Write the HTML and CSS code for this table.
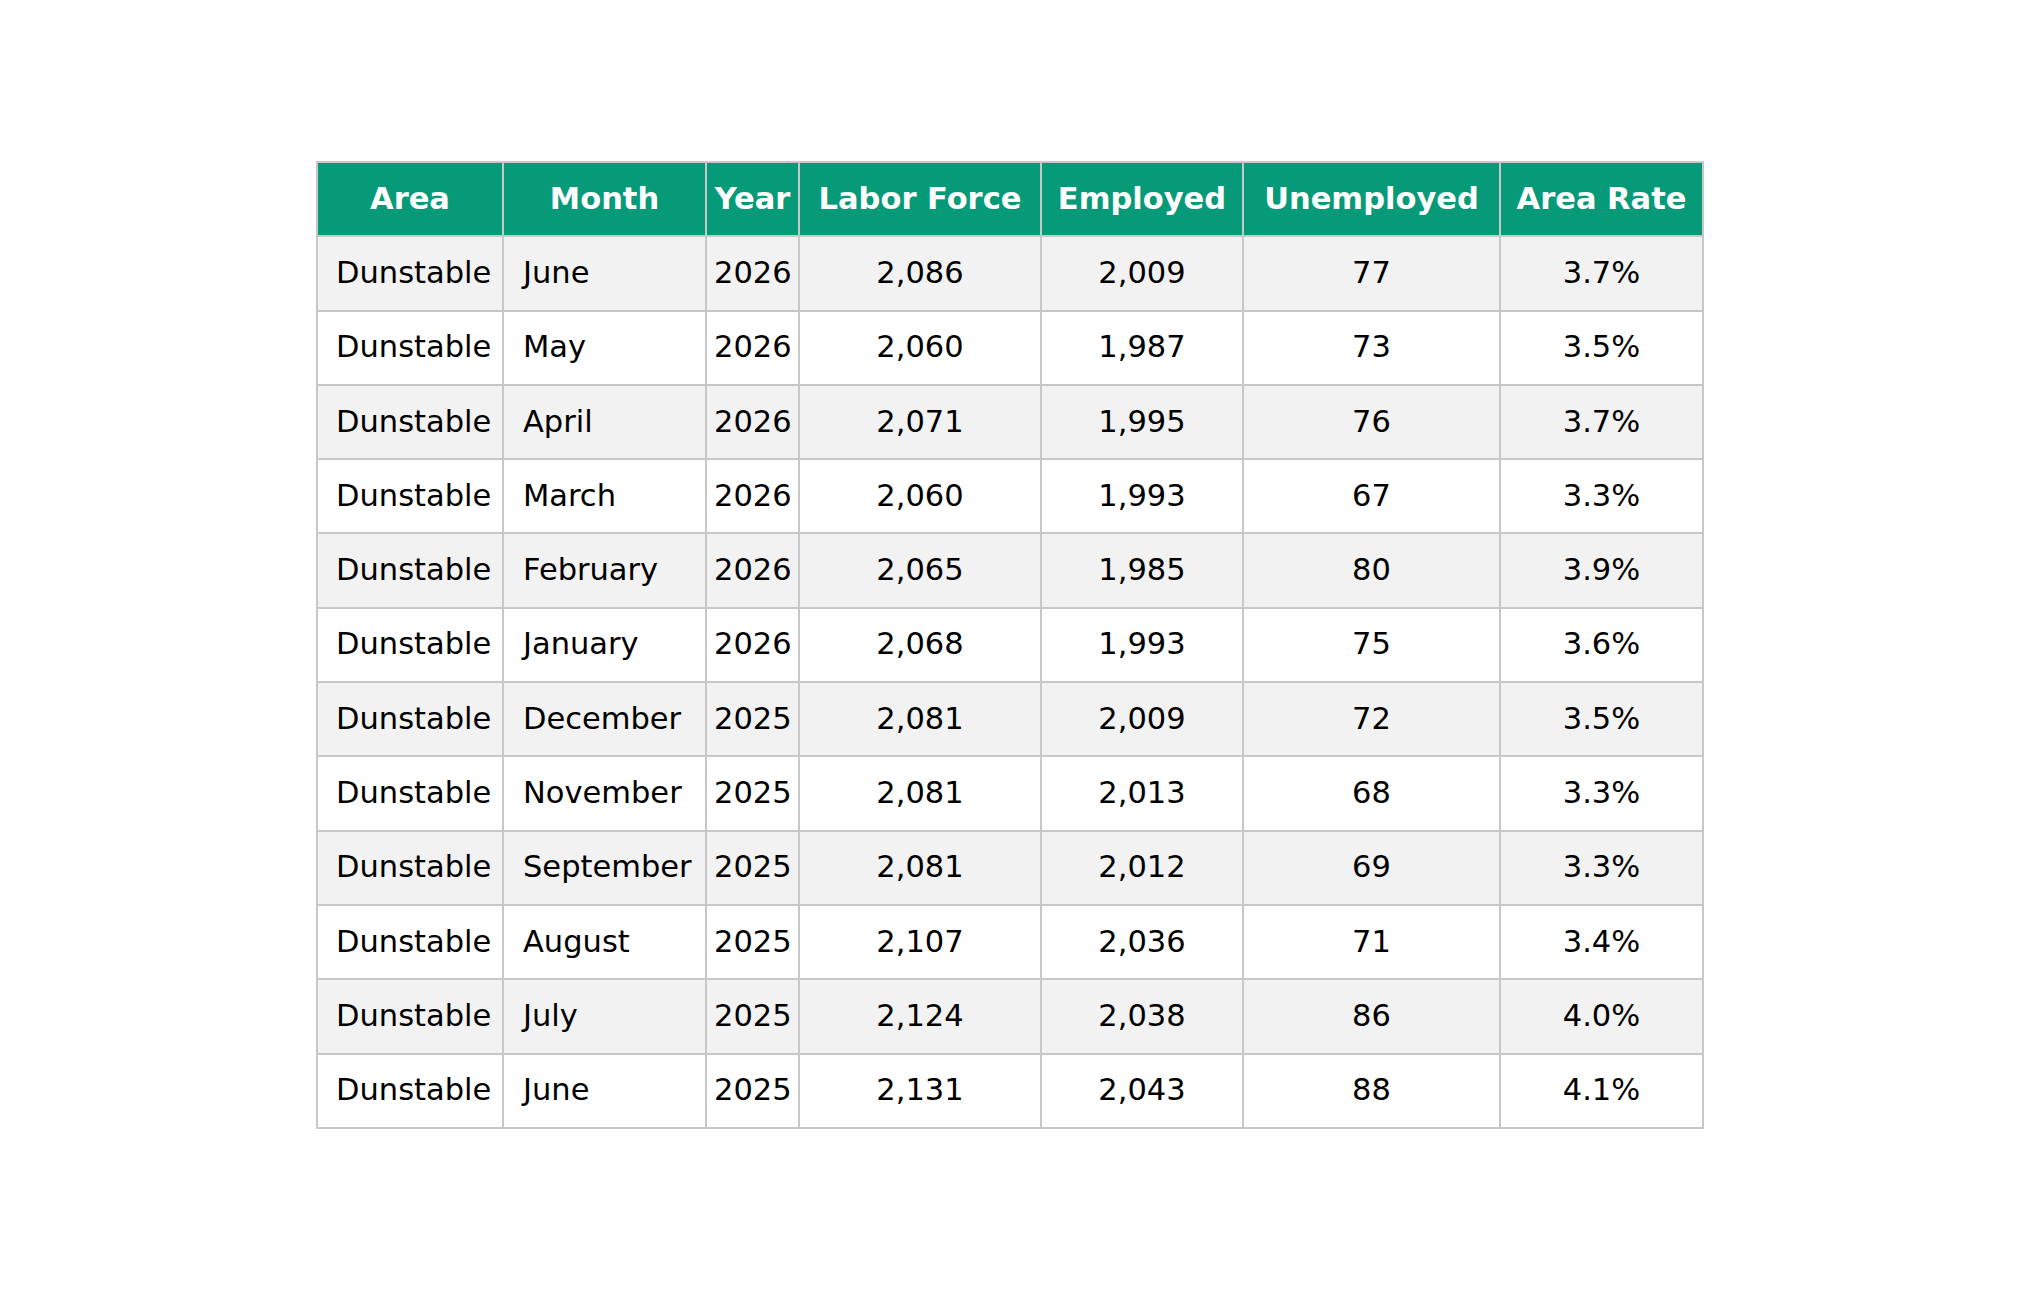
FILE: index.html
```html
<!DOCTYPE html>
<html lang="en">
<head>
<meta charset="utf-8">
<title>Dunstable Labor Force</title>
<link rel="stylesheet" href="styles.css">
</head>
<body>
<main class="page">
<table class="data">
<colgroup>
<col class="c-area"><col class="c-month"><col class="c-year"><col class="c-lf"><col class="c-emp"><col class="c-unemp"><col class="c-rate">
</colgroup>
<thead>
<tr><th>Area</th><th>Month</th><th>Year</th><th>Labor Force</th><th>Employed</th><th>Unemployed</th><th>Area Rate</th></tr>
</thead>
<tbody>
<tr><td class="area">Dunstable</td><td class="month">June</td><td class="year">2026</td><td>2,086</td><td>2,009</td><td>77</td><td>3.7%</td></tr>
<tr><td class="area">Dunstable</td><td class="month">May</td><td class="year">2026</td><td>2,060</td><td>1,987</td><td>73</td><td>3.5%</td></tr>
<tr><td class="area">Dunstable</td><td class="month">April</td><td class="year">2026</td><td>2,071</td><td>1,995</td><td>76</td><td>3.7%</td></tr>
<tr><td class="area">Dunstable</td><td class="month">March</td><td class="year">2026</td><td>2,060</td><td>1,993</td><td>67</td><td>3.3%</td></tr>
<tr><td class="area">Dunstable</td><td class="month">February</td><td class="year">2026</td><td>2,065</td><td>1,985</td><td>80</td><td>3.9%</td></tr>
<tr><td class="area">Dunstable</td><td class="month">January</td><td class="year">2026</td><td>2,068</td><td>1,993</td><td>75</td><td>3.6%</td></tr>
<tr><td class="area">Dunstable</td><td class="month">December</td><td class="year">2025</td><td>2,081</td><td>2,009</td><td>72</td><td>3.5%</td></tr>
<tr><td class="area">Dunstable</td><td class="month">November</td><td class="year">2025</td><td>2,081</td><td>2,013</td><td>68</td><td>3.3%</td></tr>
<tr><td class="area">Dunstable</td><td class="month">September</td><td class="year">2025</td><td>2,081</td><td>2,012</td><td>69</td><td>3.3%</td></tr>
<tr><td class="area">Dunstable</td><td class="month">August</td><td class="year">2025</td><td>2,107</td><td>2,036</td><td>71</td><td>3.4%</td></tr>
<tr><td class="area">Dunstable</td><td class="month">July</td><td class="year">2025</td><td>2,124</td><td>2,038</td><td>86</td><td>4.0%</td></tr>
<tr><td class="area">Dunstable</td><td class="month">June</td><td class="year">2025</td><td>2,131</td><td>2,043</td><td>88</td><td>4.1%</td></tr>
</tbody>
</table>
</main>
</body>
</html>
```

FILE: styles.css
```css
html, body {
  margin: 0;
  padding: 0;
  background: #ffffff;
}
body {
  font-family: "DejaVu Sans", "Liberation Sans", sans-serif;
  color: #000000;
}
.page {
  padding: 161px 0 0 316px;
}
.data {
  border-collapse: collapse;
  table-layout: fixed;
  width: 1386px;
  font-size: 30.5px;
}
.c-area { width: 186px; }
.c-month { width: 203px; }
.c-year { width: 93px; }
.c-lf { width: 242px; }
.c-emp { width: 202px; }
.c-unemp { width: 257px; }
.c-rate { width: 203px; }
.data th,
.data td {
  border: 2px solid #c8c8c8;
  height: 74.3px;
  padding: 0 0 2px 0;
  text-align: center;
  vertical-align: middle;
  white-space: nowrap;
  box-sizing: border-box;
}
.data th {
  background: #069a79;
  color: #ffffff;
  font-weight: bold;
}
.data tbody tr:nth-child(odd) td {
  background: #f2f2f2;
}
.data td.area {
  text-align: left;
  padding-left: 18px;
}
.data td.month {
  text-align: left;
  padding-left: 19px;
}
.data td.year {
  text-align: left;
  padding-left: 7px;
}
```
